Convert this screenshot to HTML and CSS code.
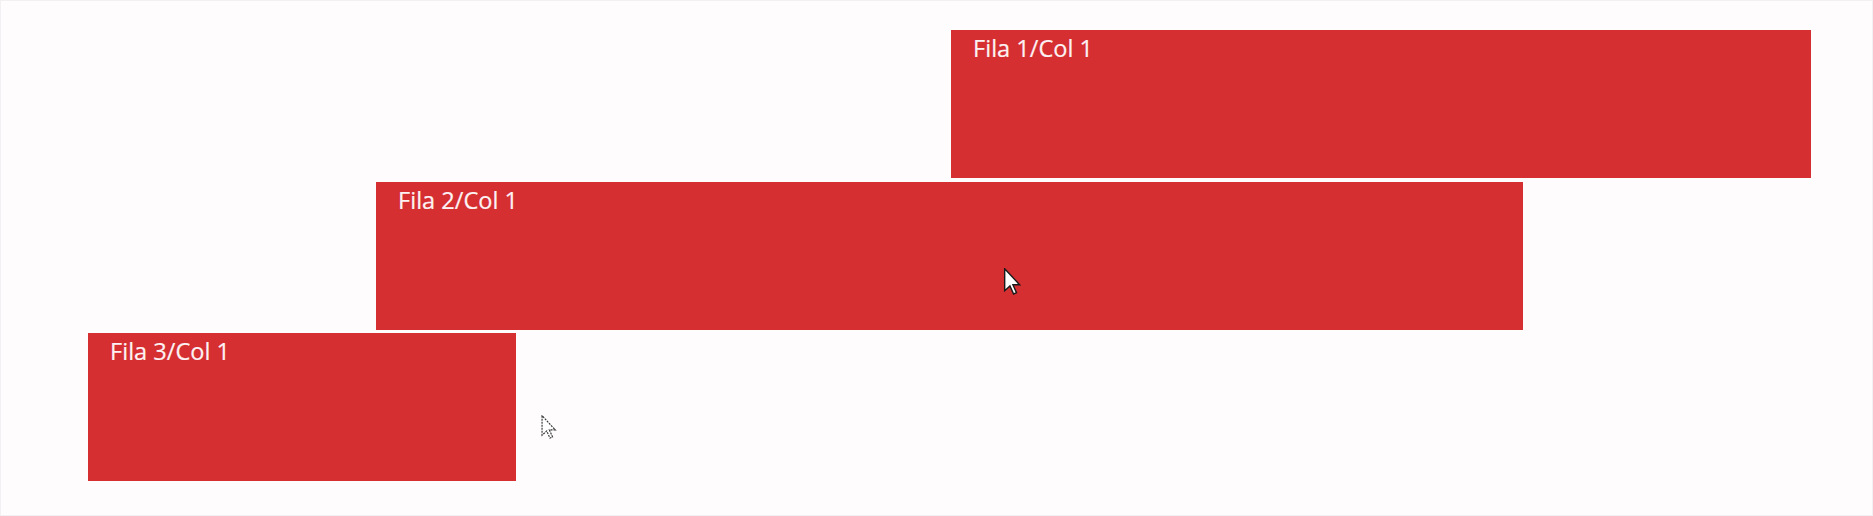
FILE: index.html
```html
<!DOCTYPE html>
<html lang="es">
<head>
<meta charset="utf-8">
<title>Grid</title>
<link rel="stylesheet" href="styles.css">
</head>
<body>
<div class="page">
  <div class="grid">
    <div class="cell r1">Fila 1/Col 1</div>
    <div class="cell r2">Fila 2/Col 1</div>
    <div class="cell r3">Fila 3/Col 1</div>
  </div>
  <svg class="cursor cursor-solid" width="19" height="27" viewBox="0 0 12 19">
    <path d="M0.5,0.5 L0.5,16 L4.2,12.6 L6.8,18.3 L8.8,17.4 L6.3,11.8 L11,11.8 Z" fill="#ffffff" stroke="#1a1a1a" stroke-width="1" stroke-linejoin="miter"/>
  </svg>
  <svg class="cursor cursor-hollow" width="16" height="24" viewBox="0 0 12 19">
    <path d="M0.5,0.5 L0.5,16 L4.2,12.6 L6.8,18.3 L8.8,17.4 L6.3,11.8 L11,11.8 Z" fill="#ffffff" stroke="#333333" stroke-width="0.9" stroke-dasharray="1.6 0.8"/>
  </svg>
</div>
</body>
</html>
```

FILE: styles.css
```css
html, body {
  margin: 0;
  padding: 0;
  background: #fefcfd;
}

.page {
  position: relative;
  box-sizing: border-box;
  width: 1873px;
  height: 516px;
  border: 1px solid #f2f0f2;
  padding: 29px 0 0 87px;
}

.grid {
  display: grid;
  grid-template-columns: 288px 140px 435px 572px 288px;
  grid-template-rows: 148px 148px 148px;
  row-gap: 3.5px;
}

.cell {
  background: #d52f32;
  color: #fdf2f3;
  font-family: "Open Sans", "Noto Sans", sans-serif;
  font-size: 23.6px;
  line-height: 31px;
  padding: 3px 22px 0;
  -webkit-text-stroke: 0.2px #fdf2f3;
}

.r1 { grid-column: 4 / 6; grid-row: 1; }
.r2 { grid-column: 2 / 5; grid-row: 2; }
.r3 { grid-column: 1 / 3; grid-row: 3; }

.cursor {
  position: absolute;
}

.cursor-solid {
  left: 1002px;
  top: 267px;
}

.cursor-hollow {
  left: 540px;
  top: 414px;
}
```
